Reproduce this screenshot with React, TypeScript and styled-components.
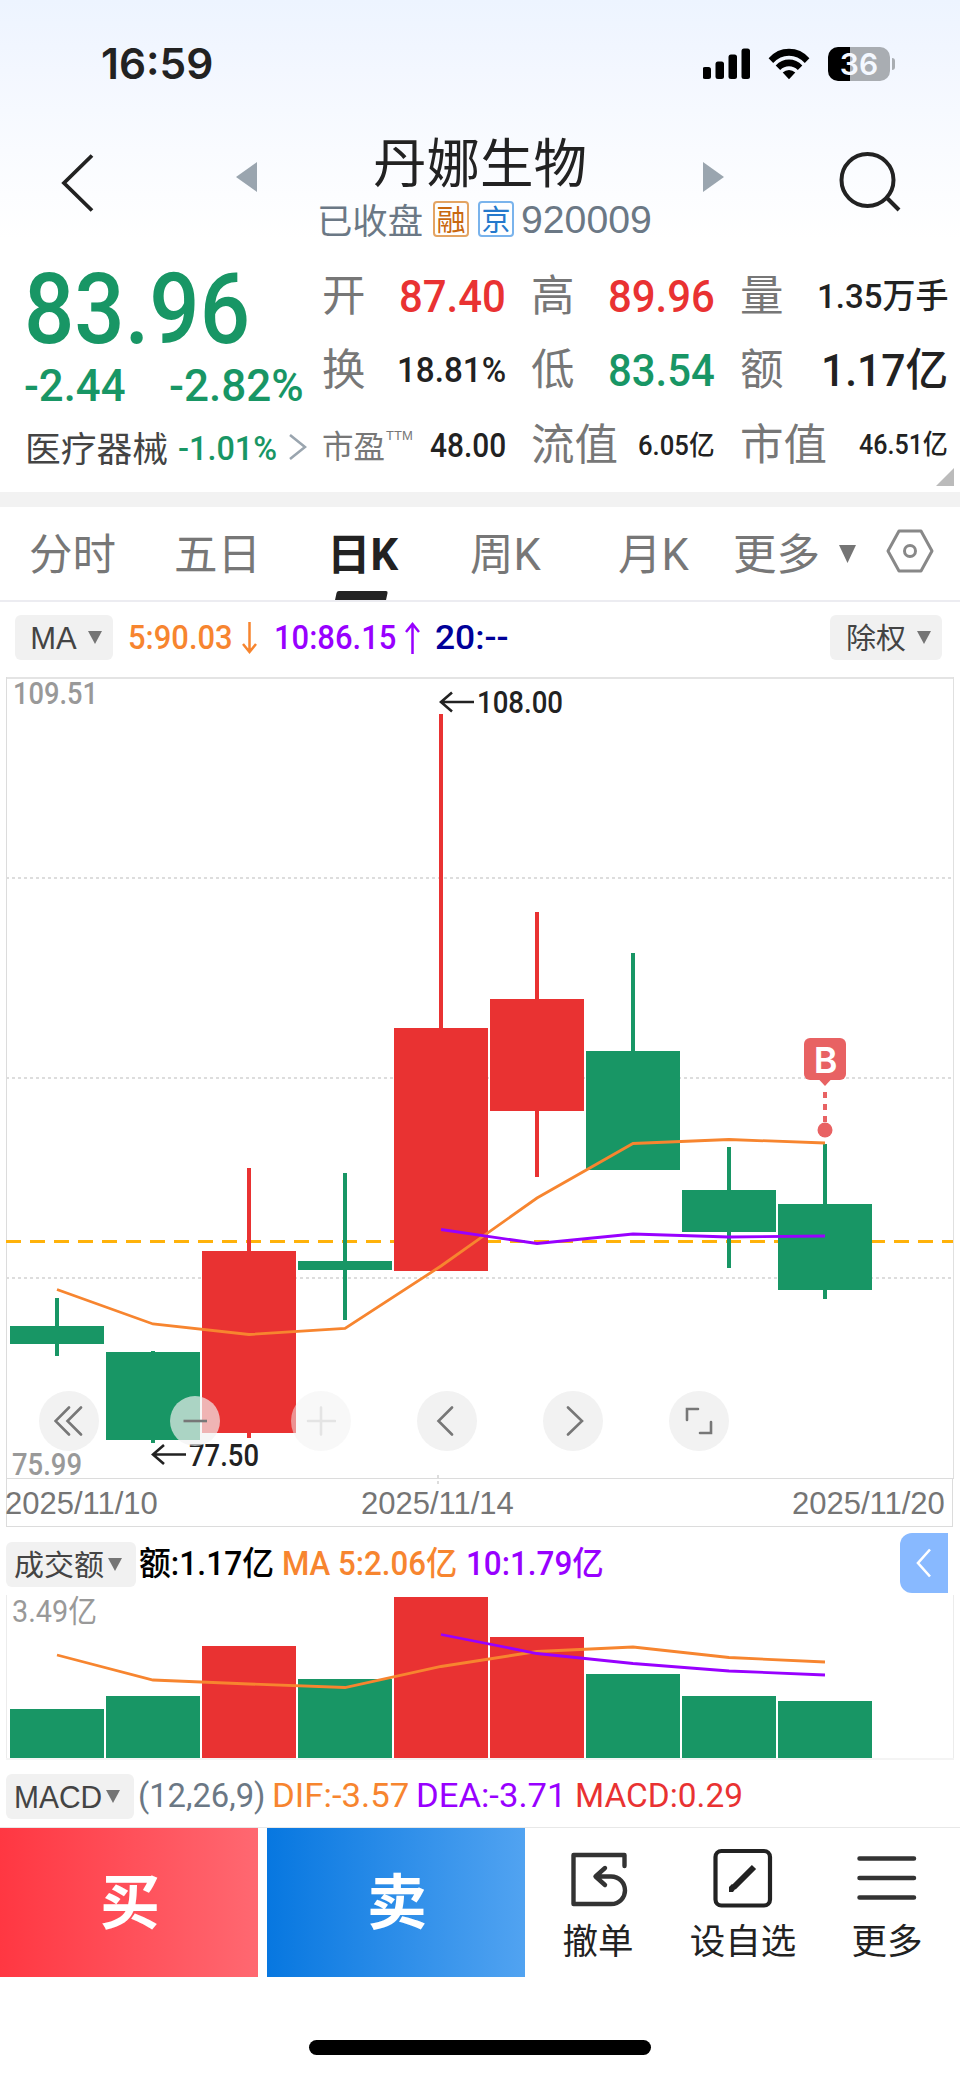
import React, { useLayoutEffect, useRef, useState } from 'react';
import styled, { createGlobalStyle, css } from 'styled-components';

const RED = '#e93232';
const GREEN = '#189665';
const ORANGE = '#f7852f';
const PURPLE = '#9800ff';
const SLATE = '#6b7885';
const GREY = '#777777';
const INK = '#222222';

const cjk = `'Noto Sans CJK SC', sans-serif`;
const din = `Roboto, 'Noto Sans CJK SC', sans-serif`;
const helv = `'Liberation Sans', 'Noto Sans CJK SC', sans-serif`;

const GlobalStyle = createGlobalStyle`
  * { box-sizing: border-box; }
  html, body { margin: 0; padding: 0; background: #fff; }
  body { font-family: ${cjk}; color: ${INK}; }
`;

/* ---------- text condensed or widened to its column ---------- */

const FitBox = styled.span<{ $w: number; $ml?: number; $dy?: number }>`
  display: block;
  flex: none;
  width: ${(p) => p.$w}px;
  margin-left: ${(p) => p.$ml ?? 0}px;
  padding-top: ${(p) => Math.max(0, 2 * (p.$dy ?? 0))}px;
  padding-bottom: ${(p) => Math.max(0, -2 * (p.$dy ?? 0))}px;
`;

const FitInner = styled.span<{ $size: number; $color?: string; $weight?: number; $font?: string }>`
  display: inline-block;
  vertical-align: top;
  white-space: nowrap;
  transform-origin: 0 50%;
  line-height: 1;
  font-family: ${(p) => p.$font ?? din};
  font-size: ${(p) => p.$size}px;
  font-weight: ${(p) => p.$weight ?? 400};
  color: ${(p) => p.$color ?? INK};
`;

type FitProps = {
  w: number;
  size: number;
  ml?: number;
  dy?: number;
  color?: string;
  weight?: number;
  font?: string;
  children: string;
};

function Fit({ w, size, ml, dy, color, weight, font, children }: FitProps) {
  const ref = useRef<HTMLSpanElement>(null);
  const [k, setK] = useState(1);
  useLayoutEffect(() => {
    if (ref.current) setK(w / ref.current.offsetWidth);
  }, [w, children]);
  return (
    <FitBox $w={w} $ml={ml} $dy={dy}>
      <FitInner ref={ref} $size={size} $color={color} $weight={weight} $font={font} style={{ transform: `scaleX(${k})` }}>
        {children}
      </FitInner>
    </FitBox>
  );
}

/* ---------- page frame ---------- */

const Page = styled.main`
  width: 960px;
  height: 2079px;
  display: flex;
  flex-direction: column;
  overflow: hidden;
  background: linear-gradient(180deg, #edf4ff 0, #f3f7ff 70px, #f9fbff 150px, #fff 240px);
`;

const StatusBar = styled.div`
  height: 126px;
  display: flex;
  align-items: center;
  padding: 2px 0 0 101px;
  svg { display: block; flex: none; }
`;

const Signal = styled.svg`
  margin-right: 17px;
`;

const Spacer = styled.div`
  flex: 1;
`;

const Battery = styled.div`
  width: 62px;
  height: 34px;
  margin-left: 18px;
  border-radius: 10px;
  background: linear-gradient(90deg, #000 22px, #a9adb2 22px);
  display: flex;
  align-items: center;
  justify-content: center;
  font: 600 30px/34px Inter, sans-serif;
  color: #f4f8ff;
`;

const BatteryNub = styled.div`
  width: 3px;
  height: 12px;
  margin: 0 65px 0 2px;
  border-radius: 0 3px 3px 0;
  background: #a9adb2;
`;

const NavBar = styled.header`
  height: 124px;
  display: flex;
  align-items: flex-start;
  svg { display: block; flex: none; }
`;

const TitleBlock = styled.div`
  width: 446px;
  height: 124px;
  display: flex;
  flex-direction: column;
`;

const Title = styled.h1`
  margin: 0;
  font: 400 53.5px/68px ${cjk};
  text-align: center;
`;

const SubTitle = styled.div`
  height: 44px;
  padding-left: 60px;
  display: flex;
  align-items: center;
  margin-top: 3px;
`;

const Tag = styled.span<{ $color: string; $line: string; $ml: number }>`
  width: 36px;
  height: 36px;
  margin-left: ${(p) => p.$ml}px;
  border: 2px solid ${(p) => p.$line};
  border-radius: 4px;
  color: ${(p) => p.$color};
  font: 400 29px/30px ${cjk};
  display: flex;
  justify-content: center;
`;

/* ---------- quote ---------- */

const Quote = styled.section`
  height: 242px;
  display: flex;
  position: relative;
`;

const PriceCol = styled.div`
  width: 322px;
  padding-left: 24px;
`;

const PriceRow = styled.div<{ $h: number }>`
  height: ${(p) => p.$h}px;
  display: flex;
  align-items: center;
`;

const StatGrid = styled.div`
  width: 626px;
  display: grid;
  grid-template-columns: 184px 25px 184px 25px 208px;
  grid-template-rows: 74px 75px 75px;
  padding-top: 9px;
`;

const Stat = styled.div<{ $col: number }>`
  grid-column: ${(p) => p.$col * 2 + 1};
  display: flex;
  align-items: center;
  justify-content: space-between;
`;

const StatName = styled.span<{ $small?: boolean }>`
  font: 400 ${(p) => (p.$small ? 31.5 : 43.5)}px/60px ${cjk};
  color: ${GREY};
  display: flex;
  white-space: nowrap;
  padding-bottom: ${(p) => (p.$small ? 4 : 7)}px;
  sup { font: 400 13px/13px ${helv}; margin: 15px 0 0 1px; }
`;

const Corner = styled.svg`
  position: absolute;
  right: 6px;
  bottom: 6px;
`;

const Chevron = styled.svg`
  margin-left: 12px;
`;

const Band = styled.div`
  height: 15px;
  background: #f2f2f2;
`;

/* ---------- tabs ---------- */

const Tabs = styled.nav`
  height: 95px;
  padding-left: 29px;
  border-bottom: 2px solid #ececf1;
  display: flex;
  align-items: center;
`;

const Tab = styled.div<{ $w: number; $on?: boolean }>`
  width: ${(p) => p.$w}px;
  height: 93px;
  font: ${(p) => (p.$on ? 700 : 400)} 43.5px/97px ${din};
  color: ${(p) => (p.$on ? INK : GREY)};
  white-space: nowrap;
  position: relative;
  ${(p) =>
    p.$on &&
    css`
      &::after {
        content: '';
        position: absolute;
        left: 9px;
        bottom: 0;
        width: 51px;
        height: 9px;
        border-radius: 2px 2px 0 0;
        background: ${INK};
        transform: skewX(-12deg);
      }
    `}
`;

const HexIcon = styled.svg`
  margin: 0 0 5px 30px;
`;

/* ---------- indicator rows ---------- */

const IndicatorRow = styled.div<{ $h: number; $pl: number; $pb?: number }>`
  height: ${(p) => p.$h}px;
  padding-left: ${(p) => p.$pl}px;
  padding-bottom: ${(p) => p.$pb ?? 0}px;
  display: flex;
  align-items: center;
  position: relative;
  svg { flex: none; display: block; }
`;

const Picker = styled.button<{ $w: number; $pl: number; $gap: number; $mt?: number; $mr?: number }>`
  flex: none;
  width: ${(p) => p.$w}px;
  height: 45px;
  margin-top: ${(p) => p.$mt ?? 0}px;
  margin-right: ${(p) => p.$mr ?? 0}px;
  padding: 0 0 0 ${(p) => p.$pl}px;
  border: 0;
  border-radius: 6px;
  background: #f1f1f1;
  color: #444;
  display: flex;
  align-items: center;
  gap: ${(p) => p.$gap}px;
`;

const TrendIcon = styled.svg`
  margin-left: 9px;
`;

const Drawer = styled.button`
  position: absolute;
  right: 12px;
  top: 6px;
  width: 48px;
  height: 60px;
  border: 0;
  padding: 0;
  border-radius: 12px 0 0 12px;
  background: #88b9ff;
`;

/* ---------- charts ---------- */

const ChartArea = styled.section`
  position: relative;
  height: 802px;
`;

const ChartSvg = styled.svg`
  display: block;
  overflow: visible;
`;

const DateRow = styled.div`
  height: 48px;
  margin: 0 7px 0 6px;
  border: 1px solid #dcdcdc;
  border-top: 0;
  display: flex;
  align-items: center;
`;

const Controls = styled.div`
  position: absolute;
  left: 39px;
  top: 714px;
  height: 60px;
  display: flex;
  align-items: center;
  gap: 66px;
`;

const Round = styled.button<{ $kind?: 'minus' | 'off' }>`
  width: ${(p) => (p.$kind === 'minus' ? 50 : 60)}px;
  height: ${(p) => (p.$kind === 'minus' ? 50 : 60)}px;
  margin: 0 ${(p) => (p.$kind === 'minus' ? 5 : 0)}px;
  border: 0;
  padding: 0;
  border-radius: 50%;
  background: ${(p) => (p.$kind === 'minus' ? 'rgba(242,242,242,.68)' : p.$kind === 'off' ? 'rgba(242,242,242,.5)' : '#f2f2f2')};
  display: flex;
  align-items: center;
  justify-content: center;
`;

/* ---------- bottom ---------- */

const ActionBar = styled.footer`
  height: 150px;
  border-top: 1px solid #e8e8e8;
  display: flex;
`;

const Trade = styled.button<{ $from: string; $to: string }>`
  width: 258px;
  height: 149px;
  margin-right: 9px;
  padding: 0 0 0 2px;
  border: 0;
  background: linear-gradient(90deg, ${(p) => p.$from}, ${(p) => p.$to});
  color: #fff;
  font: 700 60px/139px ${cjk};
  display: flex;
  align-items: flex-start;
  justify-content: center;
`;

const Action = styled.div<{ $w: number }>`
  width: ${(p) => p.$w}px;
  display: flex;
  flex-direction: column;
  align-items: center;
  padding-top: 17px;
  font: 400 35.5px/50px ${cjk};
  svg { display: block; margin-bottom: 3px; }
`;

const HomeIndicator = styled.div`
  width: 342px;
  height: 15px;
  margin: 63px auto 0;
  border-radius: 8px;
  background: #000;
`;

/* ---------- data ---------- */

type Candle = { up?: boolean; hi: number; top: number; bot: number; lo: number; vol: number };

const candles: Candle[] = [
  { hi: 1298, top: 1326, bot: 1344, lo: 1356, vol: 1709 },
  { hi: 1351, top: 1352, bot: 1440, lo: 1443, vol: 1696 },
  { up: true, hi: 1168, top: 1251, bot: 1433, lo: 1438, vol: 1646 },
  { hi: 1173, top: 1261, bot: 1270, lo: 1320, vol: 1679 },
  { up: true, hi: 714, top: 1028, bot: 1271, lo: 1271, vol: 1597 },
  { up: true, hi: 912, top: 999, bot: 1111, lo: 1177, vol: 1637 },
  { hi: 953, top: 1051, bot: 1170, lo: 1170, vol: 1674 },
  { hi: 1147, top: 1190, bot: 1232, lo: 1268, vol: 1696 },
  { hi: 1144, top: 1204, bot: 1290, lo: 1299, vol: 1701 },
];

const ma5 = [1289.5, 1324, 1334.5, 1328.5, 1266, 1198, 1143.5, 1139.5, 1143];
const ma10 = [1229.5, 1243.5, 1234, 1237, 1236];
const vol5 = [1655, 1680, 1684, 1687.5, 1666.5, 1651.5, 1647, 1657.5, 1662];
const vol10 = [1634.5, 1653.5, 1663.5, 1671, 1675];

const cx = (i: number) => 57 + i * 96;
const points = (ys: number[], from = 0) => ys.map((y, i) => `${cx(i + from)},${y}`).join(' ');

/* ---------- small drawings ---------- */

const Caret = ({ w = 14, h = 13 }: { w?: number; h?: number }) => (
  <svg width={w} height={h} viewBox="0 0 14 13" preserveAspectRatio="none">
    <path d="M0 0h14L7 13z" fill="#757575" />
  </svg>
);

const Trend = ({ color, up }: { color: string; up?: boolean }) => (
  <TrendIcon width="15" height="32" viewBox="0 0 15 32" fill="none" stroke={color} strokeWidth="2.5">
    <path d={up ? 'M7.5 32V2M1 10l6.5-8L14 10' : 'M7.5 0v30M1 22l6.5 8L14 22'} />
  </TrendIcon>
);

const glyph = { fill: 'none', stroke: '#777', strokeWidth: 2.6, strokeLinecap: 'round' as const };

function PriceChart() {
  const label = { fontFamily: 'Roboto, sans-serif', fontSize: 31, fontWeight: 500 };
  return (
    <ChartSvg width="960" height="802" viewBox="0 677 960 802">
      <g shapeRendering="crispEdges">
        <rect x="6" y="677" width="948" height="2" fill="#e4e4e4" />
        <rect x="6" y="677" width="1" height="802" fill="#dcdcdc" />
        <rect x="953" y="677" width="1" height="802" fill="#e0e0e0" />
        <rect x="6" y="1478" width="948" height="1" fill="#dcdcdc" />
      </g>
      {[878, 1078, 1278].map((y) => (
        <path key={y} d={`M6 ${y}H953`} stroke="#dddddd" strokeWidth="2" strokeDasharray="3 3" />
      ))}
      <path d="M6 1241.500H953" stroke="#ffb20a" strokeWidth="3" strokeDasharray="15 9" />
      <path d="M438 1475v11" stroke="#ddd" strokeWidth="2" strokeDasharray="3 3" />
      <g shapeRendering="crispEdges">
        {candles.map((c, i) => (
          <g key={i} fill={c.up ? RED : GREEN}>
            <rect x={cx(i) - 2} y={c.hi} width="4" height={c.lo - c.hi} />
            <rect x={cx(i) - 47} y={c.top} width="94" height={c.bot - c.top} />
          </g>
        ))}
      </g>
      <polyline points={points(ma5)} fill="none" stroke={ORANGE} strokeWidth="2.8" />
      <polyline points={points(ma10, 4)} fill="none" stroke={PURPLE} strokeWidth="2.8" />

      <g fill="none" stroke={INK} strokeWidth="2.6">
        <path d="M441 702H474M452 692.5L441 702L452 711.5" />
        <path d="M153 1454.5H186M164 1445L153 1454.5L164 1464" />
      </g>
      <g {...label} fill={INK}>
        <text x="477" y="713" textLength="86" lengthAdjust="spacingAndGlyphs">108.00</text>
        <text x="189" y="1465.5" textLength="70" lengthAdjust="spacingAndGlyphs">77.50</text>
      </g>
      <g {...label} fill="#999">
        <text x="13" y="704" textLength="85" lengthAdjust="spacingAndGlyphs">109.51</text>
        <text x="12" y="1475" textLength="70" lengthAdjust="spacingAndGlyphs">75.99</text>
      </g>

      <g fill="#e86263">
        <rect x="804" y="1038" width="42" height="42" rx="6" />
        <path d="M819 1079.5h12l-6 6.5z" />
        <path d="M825 1092v30" stroke="#e86263" strokeWidth="4" strokeDasharray="6 6" />
        <circle cx="825" cy="1130" r="7.5" />
      </g>
      <text x="825.5" y="1073" textAnchor="middle" fill="#fff" fontFamily="Inter, sans-serif" fontWeight="600" fontSize="36">B</text>
    </ChartSvg>
  );
}

function VolumeChart() {
  return (
    <ChartSvg width="960" height="166" viewBox="0 1595 960 166">
      <g shapeRendering="crispEdges">
        <rect x="6" y="1595" width="1" height="164" fill="#ececec" />
        <rect x="953" y="1595" width="1" height="164" fill="#ececec" />
        <rect x="6" y="1758" width="948" height="2" fill="#f4f4f4" />
        {candles.map((c, i) => (
          <rect key={i} x={cx(i) - 47} y={c.vol} width="94" height={1758 - c.vol} fill={c.up ? RED : GREEN} />
        ))}
      </g>
      <text x="12" y="1622" fill="#999" fontFamily="Roboto, 'Noto Sans CJK SC', sans-serif" fontSize="31" textLength="85" lengthAdjust="spacingAndGlyphs">3.49亿</text>
      <polyline points={points(vol5)} fill="none" stroke={ORANGE} strokeWidth="2.8" />
      <polyline points={points(vol10, 4)} fill="none" stroke={PURPLE} strokeWidth="2.8" />
    </ChartSvg>
  );
}

export default function App() {
  return (
    <Page>
      <GlobalStyle />
      <StatusBar>
        <Fit w={112} size={42} weight={600} font="Inter, sans-serif">16:59</Fit>
        <Spacer />
        <Signal width="48" height="32" viewBox="0 0 48 32">
          <rect x="-0.5" y="19" width="8.5" height="12" rx="2.5" />
          <rect x="12.500" y="13.500" width="8.500" height="17.500" rx="2.500" />
          <rect x="25.500" y="6.500" width="8.500" height="24.500" rx="2.500" />
          <rect x="38.500" y="0.500" width="8.500" height="30.500" rx="2.500" />
        </Signal>
        <svg width="42" height="32" viewBox="0 0 42 32">
          <path d="M0.6 10.2Q9 .8 21 .8T41.4 10.2L36.8 15Q30 7.8 21 7.8T5.2 15zM7.7 17.4Q13.4 11.5 21 11.5T34.3 17.4L29.8 22Q26 18.3 21 18.3T12.2 22zM14.7 24.5Q17.4 22 21 22T27.3 24.5L21 31.2z" />
        </svg>
        <Battery>36</Battery>
        <BatteryNub />
      </StatusBar>

      <NavBar>
        <svg width="236" height="100" viewBox="0 126 236 100" fill="none" stroke={INK} strokeWidth="3.8">
          <path d="M92 155.5L64 183L92 210.5" />
        </svg>
        <svg width="21" height="100" viewBox="0 126 21 100">
          <path d="M21 162v30L0 177z" fill="#9aa5af" />
        </svg>
        <TitleBlock>
          <Title>丹娜生物</Title>
          <SubTitle>
            <Fit w={106} size={35} dy={-1} color={SLATE} font={cjk}>已收盘</Fit>
            <Tag $color="#c9680f" $line="#e3a463" $ml={10}>融</Tag>
            <Tag $color="#2479cc" $line="#79b3ec" $ml={9}>京</Tag>
            <Fit w={131} size={38} ml={7} dy={0.5} color={SLATE} font={helv}>920009</Fit>
          </SubTitle>
        </TitleBlock>
        <svg width="21" height="100" viewBox="0 126 21 100">
          <path d="M0 162v30L21 177z" fill="#9aa5af" />
        </svg>
        <svg width="236" height="100" viewBox="724 126 236 100" fill="none" stroke={INK} strokeWidth="4">
          <circle cx="867.500" cy="180" r="26" />
          <path d="M886 197L899 210" />
        </svg>
      </NavBar>

      <Quote>
        <PriceCol>
          <PriceRow $h={118}>
            <Fit w={226} size={98} weight={500} color={GREEN} dy={0.5}>83.96</Fit>
          </PriceRow>
          <PriceRow $h={35}>
            <Fit w={102} size={45} weight={500} color={GREEN}>-2.44</Fit>
            <Fit w={135} ml={43} size={45} weight={500} color={GREEN}>-2.82%</Fit>
          </PriceRow>
          <PriceRow $h={88}>
            <Fit w={143} ml={1} size={35} dy={-1} color="#444" font={cjk}>医疗器械</Fit>
            <Fit w={99} ml={10} size={34} weight={500} color={GREEN} dy={0.5}>-1.01%</Fit>
            <Chevron width="18" height="26" viewBox="0 0 18 26" fill="none" stroke="#9aa5af" strokeWidth="2.6">
              <path d="M1 1l15 12L1 25" />
            </Chevron>
          </PriceRow>
        </PriceCol>
        <StatGrid>
          <Stat $col={0}><StatName>开</StatName><Fit w={107} size={45} weight={500} color={RED}>87.40</Fit></Stat>
          <Stat $col={1}><StatName>高</StatName><Fit w={107} size={45} weight={500} color={RED}>89.96</Fit></Stat>
          <Stat $col={2}><StatName>量</StatName><Fit w={131} size={34} weight={500}>1.35万手</Fit></Stat>
          <Stat $col={0}><StatName>换</StatName><Fit w={109} size={35} weight={500}>18.81%</Fit></Stat>
          <Stat $col={1}><StatName>低</StatName><Fit w={107} size={45} weight={500} color={GREEN}>83.54</Fit></Stat>
          <Stat $col={2}><StatName>额</StatName><Fit w={127} size={45} weight={500}>1.17亿</Fit></Stat>
          <Stat $col={0}><StatName $small>市盈<sup>TTM</sup></StatName><Fit w={76} size={33} weight={500}>48.00</Fit></Stat>
          <Stat $col={1}><StatName>流值</StatName><Fit w={77} size={27} weight={500} dy={0.5}>6.05亿</Fit></Stat>
          <Stat $col={2}><StatName>市值</StatName><Fit w={89} size={27} weight={500}>46.51亿</Fit></Stat>
        </StatGrid>
        <Corner width="18" height="18" viewBox="0 0 18 18"><path d="M18 0v18H0z" fill="#bbb" /></Corner>
      </Quote>

      <Band />

      <Tabs>
        <Tab $w={145}>分时</Tab>
        <Tab $w={153}>五日</Tab>
        <Tab $w={143} $on>日K</Tab>
        <Tab $w={148}>周K</Tab>
        <Tab $w={115}>月K</Tab>
        <Tab $w={106}>更多</Tab>
        <Caret w={17} h={18} />
        <HexIcon width="48" height="44" viewBox="0 0 48 44" fill="none" stroke="#888" strokeWidth="3">
          <path d="M13 2h22l11 20-11 20H13L2 22z" strokeLinejoin="round" />
          <circle cx="24" cy="22" r="5.5" />
        </HexIcon>
      </Tabs>

      <IndicatorRow $h={75} $pl={15} $pb={4}>
        <Picker $w={98} $pl={15} $gap={11}>
          <Fit w={47} size={31} color="#444" dy={1} font={helv}>MA</Fit>
          <Caret />
        </Picker>
        <Fit w={105} ml={15} size={33} weight={500} color={ORANGE}>5:90.03</Fit>
        <Trend color={ORANGE} />
        <Fit w={122} ml={17} size={33} weight={500} color={PURPLE}>10:86.15</Fit>
        <Trend color={PURPLE} up />
        <Fit w={74} ml={15} size={33} weight={500} color="#000099">20:--</Fit>
        <Spacer />
        <Picker $w={112} $pl={15} $gap={12} $mr={18}>
          <Fit w={60} size={29} dy={-1} color="#444" font={cjk}>除权</Fit>
          <Caret />
        </Picker>
      </IndicatorRow>

      <ChartArea>
        <PriceChart />
        <Controls>
          <Round>
            <svg width="30" height="30" viewBox="0 0 30 30" {...glyph}><path d="M15 1.5L1.5 15L15 28.5M27 1.5L13.5 15L27 28.5" /></svg>
          </Round>
          <Round $kind="minus">
            <svg width="30" height="30" viewBox="0 0 30 30" {...glyph}><path d="M3.500 15h23.500" strokeLinecap="butt" /></svg>
          </Round>
          <Round $kind="off">
            <svg width="30" height="30" viewBox="0 0 30 30" {...glyph} stroke="#e4e4e4"><path d="M2 15h27M15 1.5v27" /></svg>
          </Round>
          <Round>
            <svg width="30" height="30" viewBox="0 0 30 30" {...glyph}><path d="M20 1.5L6.5 15L20 28.5" /></svg>
          </Round>
          <Round>
            <svg width="30" height="30" viewBox="0 0 30 30" {...glyph}><path d="M10 1.5L24 15L10 28.5" /></svg>
          </Round>
          <Round>
            <svg width="30" height="30" viewBox="0 0 30 30" {...glyph}><path d="M3 14V3h11M27 16v11H16" /></svg>
          </Round>
        </Controls>
      </ChartArea>
      <DateRow>
        <Fit w={153} ml={-2} size={31} dy={0.5} color="#757575" font={helv}>2025/11/10</Fit>
        <Fit w={153} ml={203} size={31} dy={0.5} color="#757575" font={helv}>2025/11/14</Fit>
        <Spacer />
        <Fit w={153} size={31} dy={0.5} color="#757575" font={helv}>2025/11/20</Fit>
        <Spacer style={{ flex: '0 0 7px' }} />
      </DateRow>

      <IndicatorRow $h={68} $pl={6}>
        <Picker $w={130} $pl={7} $gap={5} $mt={6}>
          <Fit w={90} size={29} dy={-1} color="#444" font={cjk}>成交额</Fit>
          <Caret />
        </Picker>
        <Fit w={135} ml={3} size={33} weight={500} color="#000" dy={2}>额:1.17亿</Fit>
        <Fit w={175} ml={8} size={33} weight={500} color={ORANGE} dy={2}>MA 5:2.06亿</Fit>
        <Fit w={138} ml={9} size={33} weight={500} color={PURPLE} dy={2}>10:1.79亿</Fit>
        <Drawer>
          <svg width="48" height="60" viewBox="0 0 48 60" fill="none" stroke="#fff" strokeWidth="2.6">
            <path d="M30 16.5L18 30L30 43.5" />
          </svg>
        </Drawer>
      </IndicatorRow>

      <VolumeChart />

      <IndicatorRow $h={66} $pl={6}>
        <Picker $w={128} $pl={8} $gap={4} $mt={5}>
          <Fit w={88} size={31} color="#444" font={helv} dy={1}>MACD</Fit>
          <Caret />
        </Picker>
        <Fit w={128} ml={4} size={33} color={SLATE} dy={1.5}>(12,26,9)</Fit>
        <Fit w={137} ml={6} size={33} color={ORANGE} dy={1.5}>DIF:-3.57</Fit>
        <Fit w={150} ml={7} size={33} color={PURPLE} dy={1.5}>DEA:-3.71</Fit>
        <Fit w={168} ml={9} size={33} color={RED} dy={1.5}>MACD:0.29</Fit>
      </IndicatorRow>

      <ActionBar>
        <Trade $from="#ff3742" $to="#ff6871">买</Trade>
        <Trade $from="#0777e0" $to="#51a3f1">卖</Trade>
        <Action $w={128}>
          <svg width="62" height="66" viewBox="567 1845 62 66" fill="none" stroke="#333" strokeWidth="4.400">
            <path d="M624.500 1866V1855H573.500V1904H611C620 1904 625 1897 625 1890.500C625 1883 619.500 1876.500 611 1876.500H596M605 1868L595.500 1876.500L605 1885" strokeLinecap="round" strokeLinejoin="round" />
          </svg>
          撤单
        </Action>
        <Action $w={162}>
          <svg width="62" height="66" viewBox="712 1845 62 66" fill="none" stroke={INK} strokeWidth="4.200">
            <rect x="715.500" y="1851" width="54.500" height="54.500" rx="6" />
            <path d="M733.500 1887.500L754 1867" strokeWidth="6" />
            <path d="M729 1892v-5l3-3 4 4-3 4z" fill={INK} stroke="none" />
          </svg>
          设自选
        </Action>
        <Action $w={126}>
          <svg width="62" height="66" viewBox="857 1845 62 66" stroke="#333" strokeWidth="4.500" strokeLinecap="round">
            <path d="M860.500 1858.500h54.500M860.500 1878h54.500M860.500 1897.500h54.500" />
          </svg>
          更多
        </Action>
      </ActionBar>
      <HomeIndicator />
    </Page>
  );
}
